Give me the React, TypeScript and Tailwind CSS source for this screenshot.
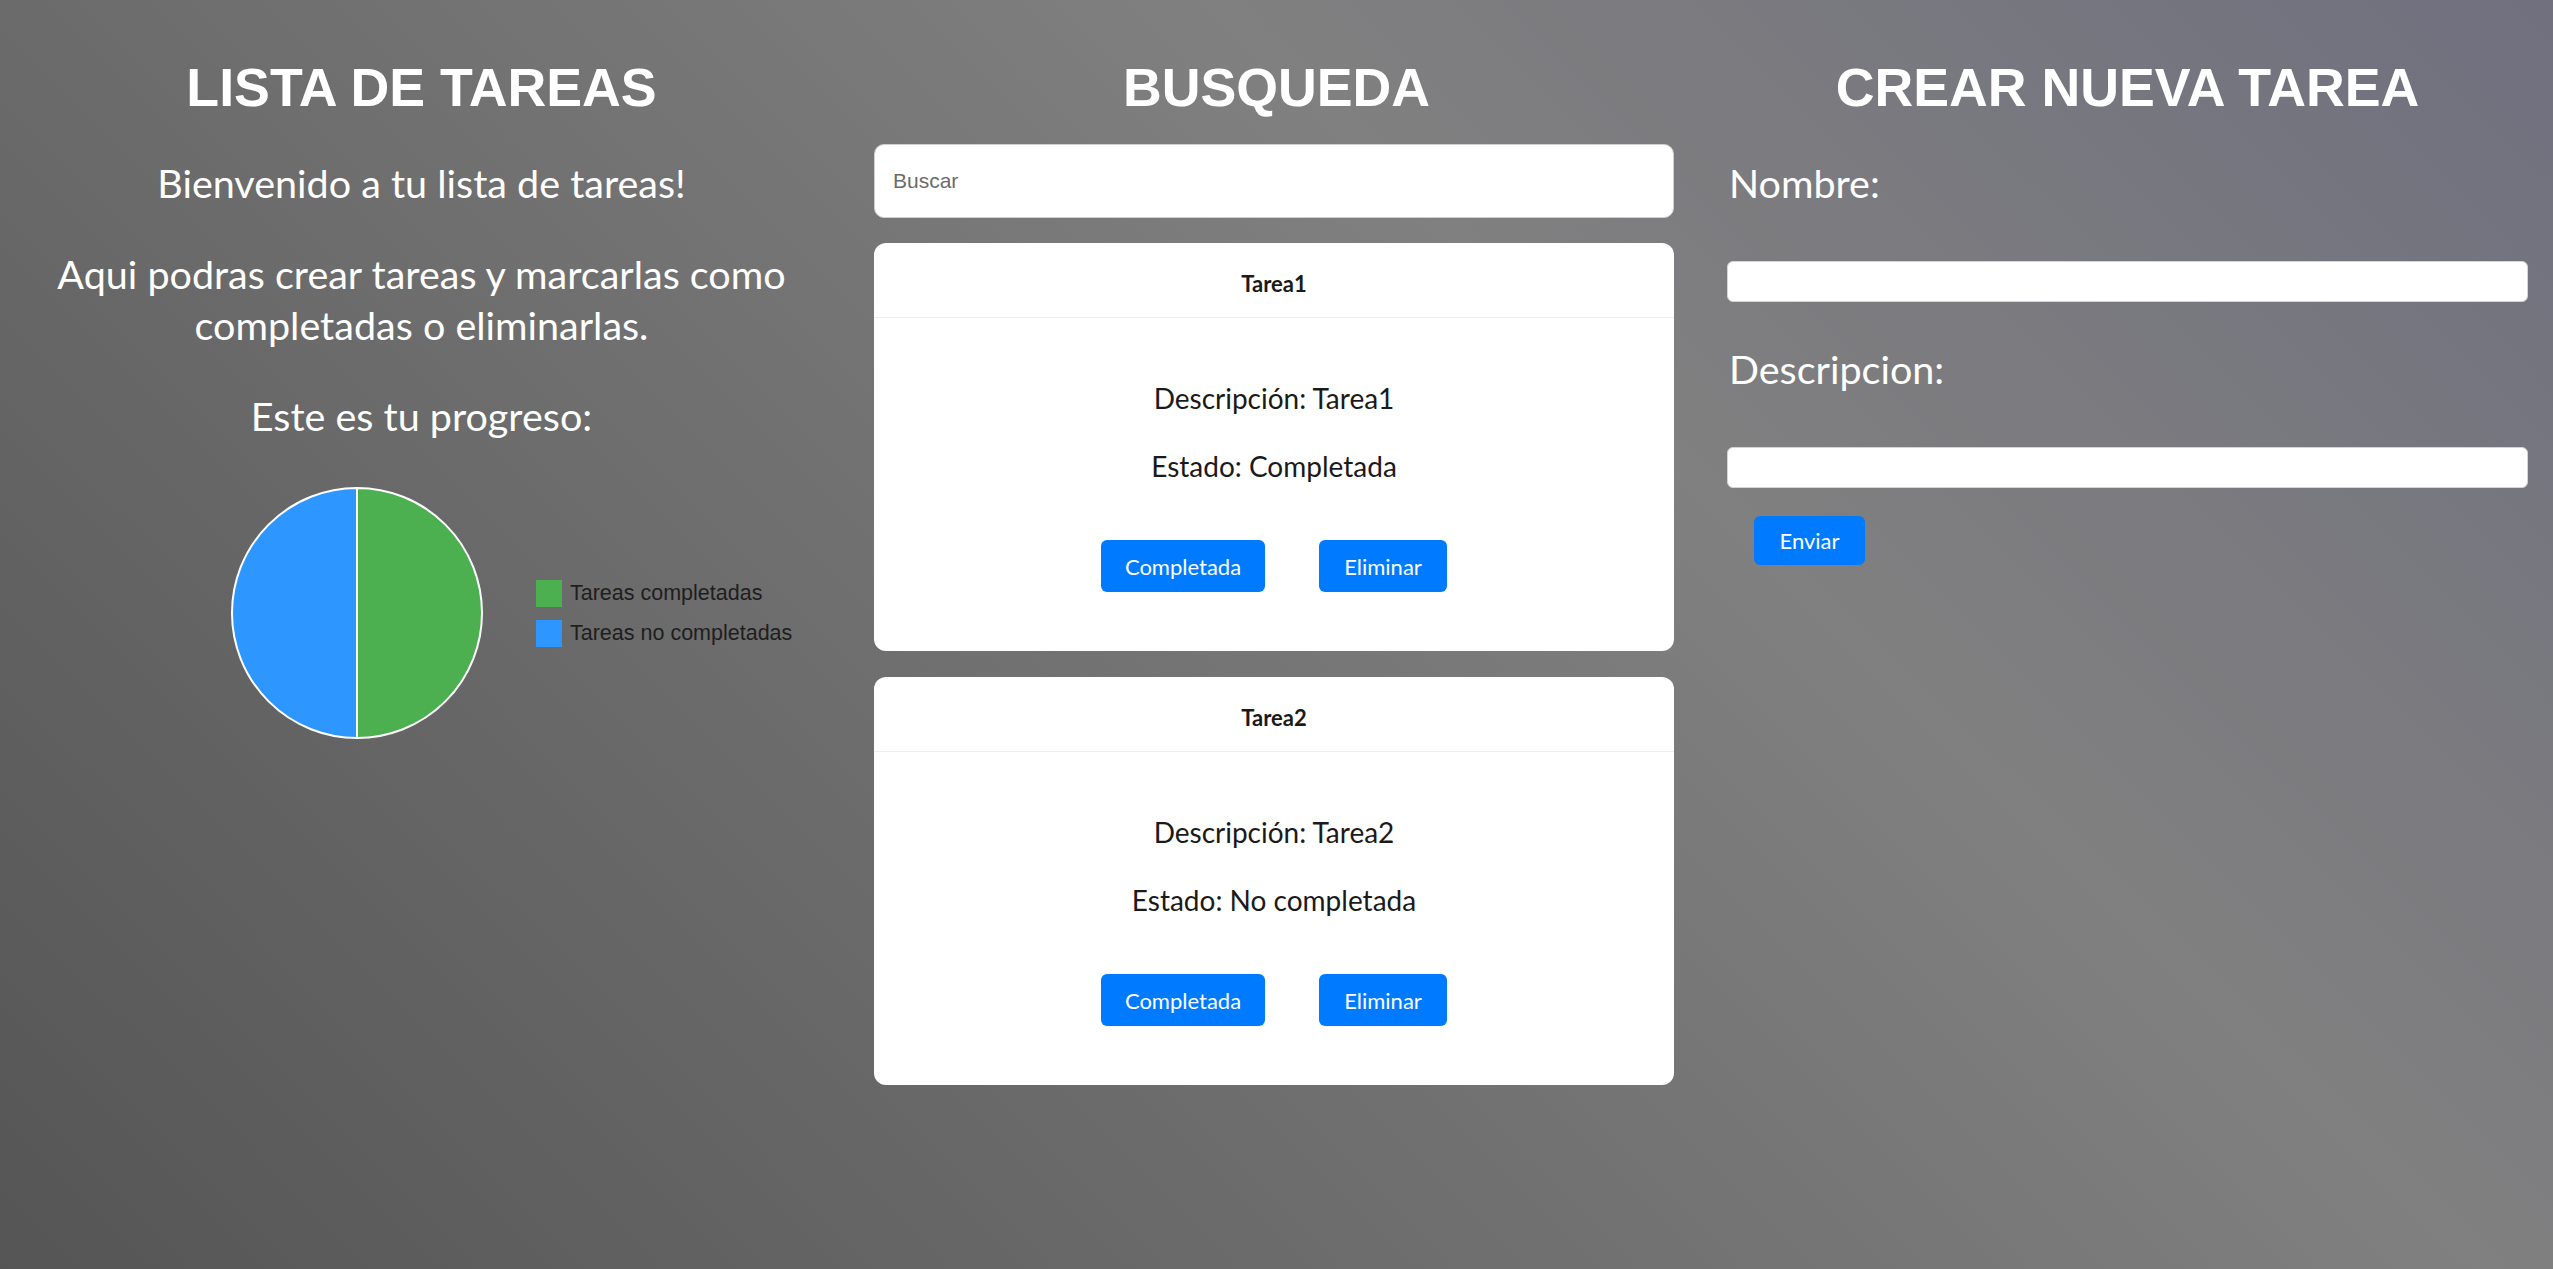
import { useState } from 'react';

type Tarea = {
  nombre: string;
  descripcion: string;
  completada: boolean;
};

const tareasIniciales: Tarea[] = [
  { nombre: 'Tarea1', descripcion: 'Tarea1', completada: true },
  { nombre: 'Tarea2', descripcion: 'Tarea2', completada: false },
];

const ProgressPie = ({ done, total }: { done: number; total: number }) => {
  // only the 50/50 case is drawn as two half discs, good enough here
  const r = 125;
  const c = 127;
  return (
    <svg width="254" height="254" viewBox="0 0 254 254">
      <path
        d={`M ${c} ${c - r} A ${r} ${r} 0 0 1 ${c} ${c + r} Z`}
        fill="#4caf50"
        stroke="#ffffff"
        strokeWidth="2"
      />
      <path
        d={`M ${c} ${c + r} A ${r} ${r} 0 0 1 ${c} ${c - r} Z`}
        fill="#2e96ff"
        stroke="#ffffff"
        strokeWidth="2"
      />
      <title>{`${done} de ${total}`}</title>
    </svg>
  );
};

const TareaCard = ({ tarea }: { tarea: Tarea }) => (
  <div className="bg-white rounded-[12px] overflow-hidden">
    <div className="h-[75px] flex items-center justify-center border-b border-[#eeeeee]">
      <span className="text-[22px] font-bold text-[#1a1a1a] leading-none pt-[7px]">{tarea.nombre}</span>
    </div>
    <div className="pt-[62px] pb-[59px] flex flex-col items-center text-[28px] text-[#1a1a1a]">
      <p className="leading-[36px]">Descripción: {tarea.descripcion}</p>
      <p className="leading-[36px] mt-[32px]">Estado: {tarea.completada ? 'Completada' : 'No completada'}</p>
      <div className="mt-[56px] flex gap-[54px]">
        <button className="h-[52px] w-[164px] rounded-[6px] bg-[#007bff] text-white text-[22px]">Completada</button>
        <button className="h-[52px] w-[128px] rounded-[6px] bg-[#007bff] text-white text-[22px]">Eliminar</button>
      </div>
    </div>
  </div>
);

export default function App() {
  const [busqueda, setBusqueda] = useState('');
  const [tareas] = useState<Tarea[]>(tareasIniciales);
  const hechas = tareas.filter((t) => t.completada).length;

  const visibles = tareas.filter((t) => t.nombre.toLowerCase().includes(busqueda.toLowerCase()));

  return (
    <div
      className="w-full min-h-screen bg-[linear-gradient(45deg,#555555_0%,#808080_65%,#70707f_100%)] text-white"
      style={{ fontFamily: 'Lato, "Open Sans", sans-serif' }}
    >
      <div className="grid grid-cols-3 pt-[56px]">
        {/* Lista */}
        <div className="pl-[20px] pr-[28px] flex flex-col">
          <h1 className="text-center text-[53.7px] leading-[62px] font-bold font-['Liberation_Sans',Arial,sans-serif]">
            LISTA DE TAREAS
          </h1>
          <div className="mt-[39px] text-center text-[39.5px] leading-[51px]">
            <p>Bienvenido a tu lista de tareas!</p>
            <p className="mt-[40px]">
              Aqui podras crear tareas y marcarlas como
              <br />
              completadas o eliminarlas.
            </p>
            <p className="mt-[40px]">Este es tu progreso:</p>
          </div>
          <div className="mt-[45px] ml-[210px] flex items-center gap-[52px]">
            <ProgressPie done={hechas} total={tareas.length} />
            <div className="flex flex-col gap-[13px] font-['Liberation_Sans',Arial,sans-serif] text-[21.5px] leading-[27px] text-[#1e1e1e]">
              <div className="flex items-center gap-[8px] h-[27px]">
                <span className="w-[26px] h-[27px] bg-[#4caf50]" />
                <span>Tareas completadas</span>
              </div>
              <div className="flex items-center gap-[8px] h-[27px]">
                <span className="w-[26px] h-[27px] bg-[#2e96ff]" />
                <span>Tareas no completadas</span>
              </div>
            </div>
          </div>
        </div>

        {/* Busqueda */}
        <div className="pl-[23px] pr-[28px] flex flex-col">
          <h1 className="text-center text-[53.7px] leading-[62px] font-bold font-['Liberation_Sans',Arial,sans-serif] pl-[5px]">
            BUSQUEDA
          </h1>
          <input
            value={busqueda}
            onChange={(e) => setBusqueda(e.target.value)}
            placeholder="Buscar"
            className="mt-[26px] h-[74px] w-full rounded-[10px] bg-white border border-[#cfcfcf] px-[18px] text-[21px] text-[#333] placeholder:text-[#6b6b6b] outline-none font-['Liberation_Sans',Arial,sans-serif]"
          />
          <div className="mt-[25px] flex flex-col gap-[26px]">
            {visibles.map((t) => (
              <TareaCard key={t.nombre} tarea={t} />
            ))}
          </div>
        </div>

        {/* Crear */}
        <div className="px-[25px] flex flex-col">
          <h1 className="text-center text-[53.7px] leading-[62px] font-bold font-['Liberation_Sans',Arial,sans-serif]">
            CREAR NUEVA TAREA
          </h1>
          <label className="mt-[39px] text-[39.5px] leading-[51px] pl-[2px]">Nombre:</label>
          <input className="mt-[53px] h-[41px] w-full rounded-[6px] bg-white border border-[#d4d4d4]" />
          <label className="mt-[41px] text-[39.5px] leading-[51px] pl-[2px]">Descripcion:</label>
          <input className="mt-[53px] h-[41px] w-full rounded-[6px] bg-white border border-[#d4d4d4]" />
          <div className="mt-[28px] pl-[27px]">
            <button className="h-[49px] w-[111px] rounded-[6px] bg-[#007bff] text-white text-[22px]">Enviar</button>
          </div>
        </div>
      </div>
    </div>
  );
}
